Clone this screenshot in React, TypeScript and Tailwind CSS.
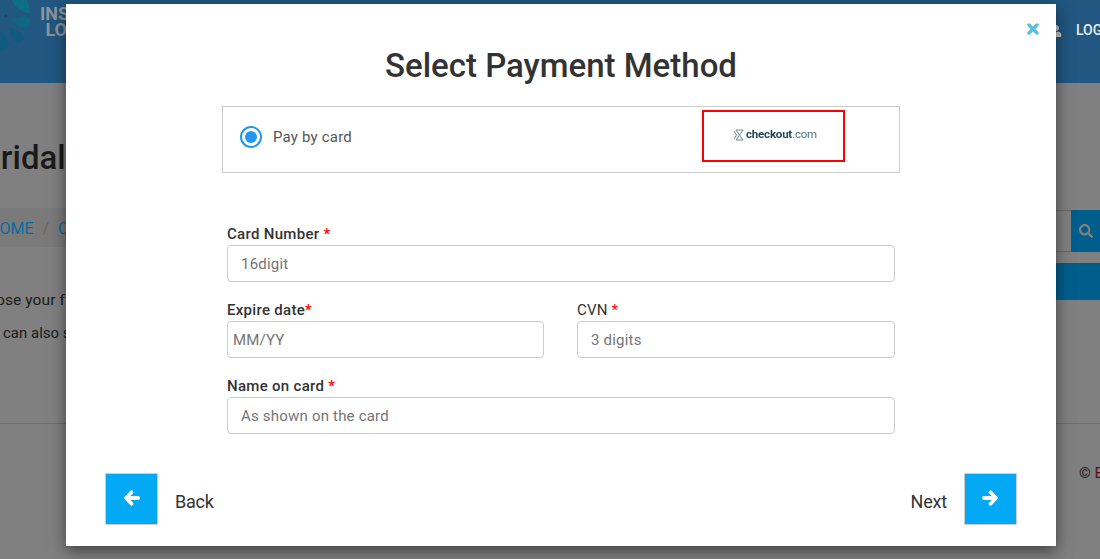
import { FaSearch, FaUser } from 'react-icons/fa';

const font = { fontFamily: 'Roboto, "Liberation Sans", sans-serif' };

function Field({
  label,
  bold = true,
  gap = true,
  placeholder,
  small = false,
}: {
  label: string;
  bold?: boolean;
  gap?: boolean;
  placeholder: string;
  small?: boolean;
}) {
  return (
    <div className="flex flex-col">
      <label className={`h-[24px] text-[15px] leading-[26px] text-[#333] ${bold ? 'font-medium tracking-[0.3px]' : 'font-normal tracking-[0.2px]'}`}>
        {label}
        {gap ? ' ' : ''}
        <span className="text-[#f00]">*</span>
      </label>
      <input
        readOnly
        placeholder={placeholder}
        className={`h-[37px] w-full rounded-[4px] border border-[#ccc] bg-white text-[15px] tracking-[0.2px] outline-none placeholder:text-[#757575] ${small ? 'pl-[5px]' : 'pl-[13px]'}`}
      />
    </div>
  );
}

function Arrow({ left = false }: { left?: boolean }) {
  return (
    <svg width="16" height="16" viewBox="0 0 16 16" className={left ? 'rotate-180' : ''}>
      <path d="M2 8 H13" fill="none" stroke="#fff" strokeWidth="4" strokeLinecap="round" />
      <path d="M8.5 2.2 L14 8 L8.5 13.8" fill="none" stroke="#fff" strokeWidth="3.6" strokeLinecap="round" strokeLinejoin="round" />
    </svg>
  );
}

function NavSquare({ left = false }: { left?: boolean }) {
  return (
    <div className={`flex h-[52px] w-[53px] items-center justify-center rounded-[1px] border border-[#ccc] bg-[#03a9f4] pb-[2px] ${left ? '' : 'pr-[1px]'}`}>
      <Arrow left={left} />
    </div>
  );
}

function BackgroundPage() {
  return (
    <div className="h-[559px] w-[1100px] overflow-hidden bg-[#808080] text-[#1a1a1a]">
      <header className="relative flex h-[83px] items-start justify-between bg-[#215781]">
        <svg width="40" height="54" viewBox="0 0 40 54" className="shrink-0">
          <path d="M12 0 C14 8 24 13 30 13 C30 8 29 3 27 0 Z" fill="#0d6e85" />
          <path d="M13 20 C20 15 30 15 30 21 C30 29 20 31 13 20 Z" fill="#0e6885" />
          <path d="M9 28 C16 29 24 33 24 38 C22 45 11 44 9 28 Z" fill="#115a80" />
          <path d="M0 30 C5 34 9 42 8 46 C6 51 0 52 0 50 Z" fill="#115a80" />
          <circle cx="6" cy="16" r="1.5" fill="#174a6e" />
        </svg>
        <div className="absolute left-[40px] top-[6px] text-center text-[18px] font-bold leading-[16px] text-[#8d949a]">
          INSURE
          <br />
          LOGIN
        </div>
        <div className="mt-[20px] flex items-center gap-[14px] pl-[8px] text-[14px] font-medium text-[#e8eef2]">
          <FaUser className="text-[12px] text-[#c8c8c8]" />
          <span className="w-[24px] overflow-hidden whitespace-nowrap">LOGIN</span>
        </div>
      </header>

      <h1 className="-ml-[20px] mt-[55px] whitespace-nowrap text-[33px] font-medium leading-[40px]">Bridal</h1>

      <div className="mt-[30px] flex items-start justify-between">
        <div className="flex h-[39px] w-[66px] items-center gap-[9px] overflow-hidden whitespace-nowrap bg-[#7a7a7a] pt-[2px] text-[16px] text-[#0b6a9e]">
          <span className="-ml-[12px]">HOME</span>
          <span className="text-[#666]">/</span>
          <span>CARD</span>
        </div>
        <div className="mt-[2px] flex w-[44px] flex-col">
          <div className="flex h-[42px] items-stretch">
            <div className="w-[15px] border-y border-[#666]" />
            <div className="flex w-[29px] items-center justify-center bg-[#005e8c] text-[14px] text-[#808080]">
              <FaSearch />
            </div>
          </div>
          <div className="mt-[11px] h-[37px] bg-[#005e8c]" />
        </div>
      </div>

      <div className="mt-[-16px] w-[66px] overflow-hidden whitespace-nowrap text-[15.5px] leading-[33px] tracking-[0.1px]">
        <p className="-ml-[4px]">ose your f</p>
        <p className="ml-[3px] text-[15px] tracking-normal">can also s</p>
      </div>

      <div className="mt-[73px] flex justify-end border-t border-[#6e6e6e] pt-[39px] text-[15px] leading-[20px]">
        <span className="w-[21px] overflow-hidden whitespace-nowrap">
          © <span className="text-[#5a1010]">By</span>
        </span>
      </div>
    </div>
  );
}

export default function App() {
  return (
    <div className="relative h-[559px] w-[1100px] overflow-hidden" style={font}>
      <BackgroundPage />

      <div className="absolute left-[66px] top-[4px] h-[542px] w-[990px] bg-white shadow-[0_5px_15px_rgba(0,0,0,0.5)]">
        <svg width="12" height="12" viewBox="0 0 12 12" className="absolute left-[961px] top-[19px]">
          <path d="M2 2 L10 10 M10 2 L2 10" fill="none" stroke="#5bc0de" strokeWidth="3.4" strokeLinecap="round" />
        </svg>

        <h2 className="pt-[42px] text-center text-[33px] font-medium leading-[40px] text-[#333]">Select Payment Method</h2>

        <div className="mx-auto mt-[20px] flex h-[67px] w-[678px] items-center border border-[#ccc] pb-[7px] pl-[17px]">
          <span className="mt-[2px] flex h-[22px] w-[22px] items-center justify-center rounded-full border-[2px] border-[#2196f3]">
            <span className="h-[12px] w-[12px] rounded-full bg-[#2196f3]" />
          </span>
          <span className="ml-[11px] mt-[2px] text-[15px] tracking-[0.2px] text-[#555]">Pay by card</span>
          <div className="ml-[350px] flex h-[52px] w-[143px] items-center justify-center border-[2px] border-[#f00] pb-[2px] pl-[3px]">
            <svg width="12" height="12" viewBox="0 0 12 12" className="mr-[1px] blur-[0.3px]">
              <path d="M1 2 L3.5 6 L1 10 M3 1 L10 11 M10 1 L3 11 M3 1 H10 M3 11 H10" fill="none" stroke="#6f8797" strokeWidth="1" />
            </svg>
            <span className="text-[11.5px] font-bold tracking-[-0.2px] text-[#24465c] blur-[0.3px]">checkout</span>
            <span className="text-[11.5px] tracking-[-0.2px] text-[#55707f] blur-[0.3px]">.com</span>
          </div>
        </div>

        <form className="ml-[161px] mt-[48px] flex w-[668px] flex-col">
          <Field label="Card Number" placeholder="16digit" />
          <div className="mt-[15px] grid grid-cols-[317px_318px] gap-x-[33px]">
            <Field label="Expire date" gap={false} placeholder="MM/YY" small />
            <Field label="CVN" bold={false} placeholder="3 digits" />
          </div>
          <div className="mt-[15px]">
            <Field label="Name on card" placeholder="As shown on the card" />
          </div>
        </form>

        <div className="mt-[39px] flex items-center justify-between px-[39px] text-[18px] tracking-[-0.2px] text-[#333]">
          <div className="flex items-center gap-[17px]">
            <NavSquare left />
            <span className="pt-[4px]">Back</span>
          </div>
          <div className="flex items-center gap-[17px]">
            <span className="pt-[4px]">Next</span>
            <NavSquare />
          </div>
        </div>
      </div>
    </div>
  );
}
